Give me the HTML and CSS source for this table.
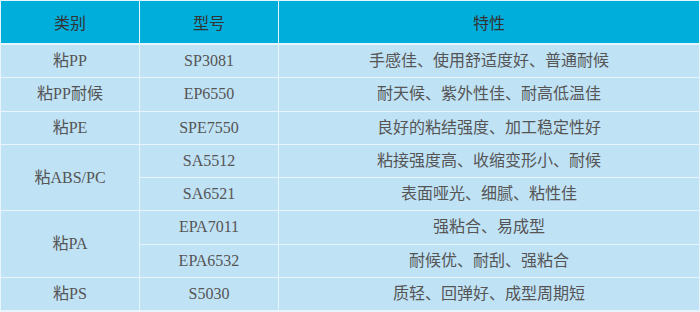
FILE: index.html
```html
<!DOCTYPE html>
<html lang="zh-CN">
<head>
<meta charset="utf-8">
<link rel="stylesheet" href="styles.css">
</head>
<body>
<table class="spec">
  <colgroup>
    <col class="c1"><col class="c2"><col class="c3">
  </colgroup>
  <thead>
    <tr><th>类别</th><th>型号</th><th>特性</th></tr>
  </thead>
  <tbody>
    <tr><td>粘PP</td><td>SP3081</td><td>手感佳、使用舒适度好、普通耐候</td></tr>
    <tr><td>粘PP耐候</td><td>EP6550</td><td>耐天候、紫外性佳、耐高低温佳</td></tr>
    <tr><td>粘PE</td><td>SPE7550</td><td>良好的粘结强度、加工稳定性好</td></tr>
    <tr><td rowspan="2">粘ABS/PC</td><td>SA5512</td><td>粘接强度高、收缩变形小、耐候</td></tr>
    <tr><td>SA6521</td><td>表面哑光、细腻、粘性佳</td></tr>
    <tr><td rowspan="2">粘PA</td><td>EPA7011</td><td>强粘合、易成型</td></tr>
    <tr><td>EPA6532</td><td>耐候优、耐刮、强粘合</td></tr>
    <tr><td>粘PS</td><td>S5030</td><td>质轻、回弹好、成型周期短</td></tr>
  </tbody>
</table>
</body>
</html>
```
FILE: styles.css
```css
html, body {
  margin: 0;
  padding: 0;
  background: #e9f5fc;
}
.spec {
  width: 700px;
  border-collapse: separate;
  border-spacing: 1px;
  background: #e9f5fc;
  table-layout: fixed;
  font-family: "Liberation Serif", "Noto Sans CJK SC", serif;
  font-size: 16px;
}
.c1 { width: 138px; }
.c2 { width: 138px; }
.c3 { width: 420px; }
.spec th {
  height: 42px;
  padding: 0;
  background: #00aedb;
  color: #333;
  font-weight: normal;
  text-align: center;
  vertical-align: middle;
  box-shadow: 0 1px 0 #e9f5fc;
}
.spec thead tr th {
  border-bottom: 1px solid #e9f5fc;
}
.spec td {
  height: 32.25px;
  padding: 0;
  background: #c0e2f5;
  color: #555;
  text-align: center;
  vertical-align: middle;
  line-height: 20px;
}
```
